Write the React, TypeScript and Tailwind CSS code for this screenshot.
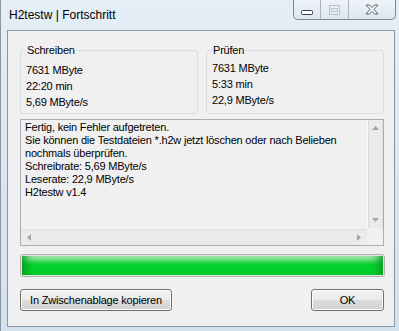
import { ReactNode } from "react";

const FONT = "font-['Liberation_Sans',Arial,sans-serif]";

function GroupBox({ title, lines, tight }: { title: string; lines: string[]; tight?: boolean }) {
  return (
    <fieldset
      className={`w-[178px] border border-[#d5dfe5] rounded-[3px] px-[5px] ${tight ? "pt-[3px] pb-[5px]" : "pt-[5px] pb-[3px]"}`}
    >
      <legend className="px-[1px] leading-[13px]">{title}</legend>
      <div className="leading-[16px]">
        {lines.map((l) => (
          <div key={l}>{l}</div>
        ))}
      </div>
    </fieldset>
  );
}

function Arrow({ dir }: { dir: "up" | "down" | "left" | "right" }) {
  const pts = {
    up: "0,4 3.5,0 7,4",
    down: "0,0 3.5,4 7,0",
    left: "4,0 0,3.5 4,7",
    right: "0,0 4,3.5 0,7",
  }[dir];
  const vert = dir === "up" || dir === "down";
  return (
    <svg width={vert ? 7 : 4} height={vert ? 4 : 7} viewBox={vert ? "0 0 7 4" : "0 0 4 7"}>
      <polygon points={pts} fill="#a3a3a3" />
    </svg>
  );
}

function Button({ children, w }: { children: ReactNode; w: string }) {
  return (
    <div
      className={`${w} h-[22px] rounded-[3px] border border-[#707070] bg-[linear-gradient(to_bottom,#f2f2f2_0%,#ebebeb_48%,#dddddd_52%,#cfcfcf_100%)] shadow-[inset_0_0_0_1px_#fcfcfc] flex items-center justify-center text-black`}
    >
      {children}
    </div>
  );
}

export default function App() {
  return (
    <div
      className={`w-[399px] h-[331px] flex flex-col bg-[linear-gradient(to_bottom,#e4eef6_0%,#dae7f2_50%,#d3e2ef_100%)] border-l border-[#8a96a2] text-[11px] text-black ${FONT}`}
    >
      {/* title bar */}
      <div className="h-[30px] flex items-start">
        <div className="pl-[8px] pt-[7px] text-[12px] leading-[16px] text-black">H2testw | Fortschritt</div>
        <div className="flex-1" />
        <div className="mr-[3px] flex h-[20px] border-x border-b border-[#7c8793] rounded-b-[5px] bg-[linear-gradient(to_bottom,#eef3f8,#dde7f0)] overflow-hidden">
          <div className="w-[27px] flex items-center justify-center border-r border-[#a9b4bf] pt-[5px]">
            <svg width="12" height="5" viewBox="0 0 12 5">
              <rect x="0.5" y="0.5" width="11" height="4" rx="1" fill="#fff" stroke="#3a3f45" />
            </svg>
          </div>
          <div className="w-[28px] flex items-center justify-center border-r border-[#a9b4bf]">
            <svg width="11" height="10" viewBox="0 0 11 10">
              <rect x="0.5" y="0.5" width="10" height="9" fill="none" stroke="#b9c2cb" />
              <rect x="2.5" y="3.5" width="6" height="3" fill="none" stroke="#b9c2cb" />
            </svg>
          </div>
          <div className="w-[46px] flex items-center justify-center">
            <svg width="14" height="11" viewBox="0 0 14 11">
              <path
                d="M1 1 H4.5 L7 3.5 L9.5 1 H13 L9 5.5 L13 10 H9.5 L7 7.5 L4.5 10 H1 L5 5.5 Z"
                fill="#eef1f4"
                stroke="#5f6870"
                strokeWidth="1"
                strokeLinejoin="round"
              />
            </svg>
          </div>
        </div>
      </div>

      {/* client area */}
      <div className="ml-[6px] mr-[4px] mb-[4px] h-[297px] border border-[#8a95a1] bg-[#f0f0f0] pl-[12px] pt-[13px] flex flex-col tracking-[-0.2px]">
        <div className="flex gap-[8px]">
          <GroupBox title="Schreiben" lines={["7631 MByte", "22:20 min", "5,69 MByte/s"]} />
          <GroupBox title="Prüfen" lines={["7631 MByte", "5:33 min", "22,9 MByte/s"]} tight />
        </div>

        {/* memo */}
        <div className="mt-[5px] w-[364px] h-[127px] border border-[#abadb3] flex flex-col">
          <div className="flex-1 flex">
            <div className="flex-1 pl-[4px] pt-[1px] leading-[13px]">
              <div>Fertig, kein Fehler aufgetreten.</div>
              <div>Sie können die Testdateien *.h2w jetzt löschen oder nach Belieben</div>
              <div>nochmals überprüfen.</div>
              <div>Schreibrate: 5,69 MByte/s</div>
              <div>Leserate: 22,9 MByte/s</div>
              <div>H2testw v1.4</div>
            </div>
            <div className="w-[16px] flex flex-col justify-between items-center bg-[#ebebeb] border-l border-[#f8f8f8] shadow-[inset_1px_0_0_#dcdcdc,inset_-1px_0_0_#dcdcdc] py-[6px]">
              <Arrow dir="up" />
              <Arrow dir="down" />
            </div>
          </div>
          <div className="h-[17px] flex">
            <div className="flex-1 flex items-center justify-between px-[6px] bg-[#ebebeb] border-t border-[#f8f8f8] shadow-[inset_0_1px_0_#dcdcdc]">
              <Arrow dir="left" />
              <Arrow dir="right" />
            </div>
            <div className="w-[16px] bg-[#f0f0f0]" />
          </div>
        </div>

        {/* progress */}
        <div className="mt-[8px] w-[365px] h-[23px] rounded-[3px] border border-[#b2b2b2] p-[1px] bg-[#e6e6e6]">
          <div className="w-full h-full rounded-[1px] bg-[linear-gradient(to_bottom,#b9efc3_0%,#6fe284_18%,#2fd64d_32%,#04d12b_45%,#00cf28_100%)] shadow-[inset_10px_0_8px_-6px_#079a22,inset_-10px_0_8px_-6px_#079a22]" />
        </div>

        {/* buttons */}
        <div className="mt-[12px] w-[364px] flex justify-between">
          <Button w="w-[152px]">In Zwischenablage kopieren</Button>
          <Button w="w-[73px]">OK</Button>
        </div>
      </div>
    </div>
  );
}
